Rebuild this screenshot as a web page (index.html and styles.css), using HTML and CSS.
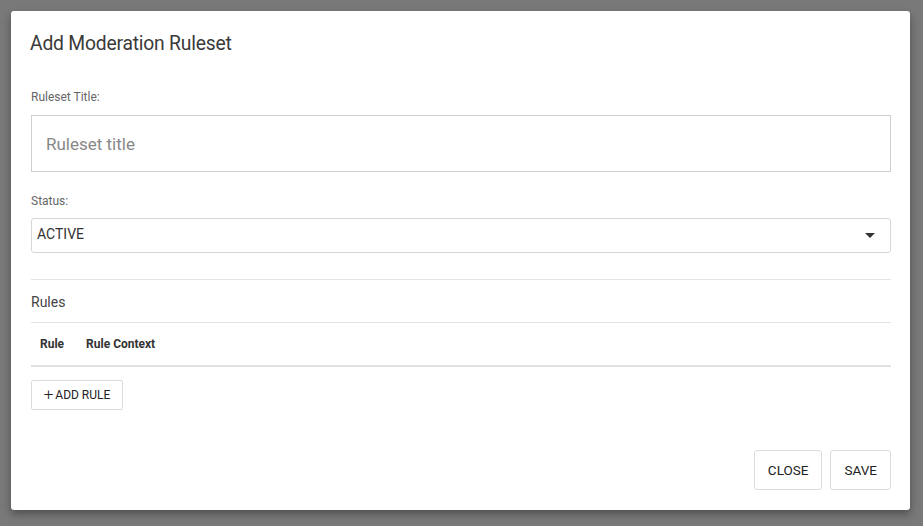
FILE: index.html
```html
<!DOCTYPE html>
<html>
<head>
<meta charset="utf-8">
<link rel="stylesheet" href="styles.css">
</head>
<body>
<div class="modal">
  <h2 class="title">Add Moderation Ruleset</h2>
  <div class="field">
    <label class="label">Ruleset Title:</label>
    <input class="text-input" type="text" placeholder="Ruleset title">
  </div>
  <div class="field field-status">
    <label class="label">Status:</label>
    <div class="select">
      <span class="select-value">ACTIVE</span>
      <svg class="caret" width="10" height="5" viewBox="0 0 10 5"><path d="M0 0 L10 0 L5 5 Z" fill="#333"/></svg>
    </div>
  </div>
  <div class="rules">
    <div class="rules-title">Rules</div>
    <div class="table-head">
      <span class="th th-rule">Rule</span>
      <span class="th">Rule Context</span>
    </div>
    <button class="btn btn-add"><span class="plus">+</span>ADD RULE</button>
  </div>
  <div class="footer">
    <button class="btn btn-footer">CLOSE</button>
    <button class="btn btn-footer">SAVE</button>
  </div>
</div>
</body>
</html>
```
FILE: styles.css
```css
html, body {
  margin: 0;
  padding: 0;
  background: #797979;
  height: 100%;
}
body {
  padding: 11px;
  box-sizing: border-box;
  font-family: Roboto, "Liberation Sans", sans-serif;
  color: #333;
}
.modal {
  width: 899px;
  height: 499px;
  box-sizing: border-box;
  background: #fff;
  border-radius: 3px;
  box-shadow: 0 4px 8px rgba(0,0,0,0.35);
  padding: 0 19px 0 20px;
  display: flex;
  flex-direction: column;
}
.title {
  margin: 20px 0 0 -1px;
  font-size: 19.3px;
  line-height: 26px;
  font-weight: 400;
  color: #3a3a3a;
  letter-spacing: -0.2px;
}
.field {
  display: flex;
  flex-direction: column;
}
.label {
  font-size: 12px;
  color: #666;
  line-height: 14px;
  margin-top: 33px;
  margin-bottom: 11px;
}
.field-status .label {
  margin-top: 22px;
  margin-bottom: 10px;
}
.text-input {
  height: 57px;
  box-sizing: border-box;
  border: 1px solid #cfcfd2;
  border-radius: 0;
  padding: 0 14px;
  font-family: inherit;
  font-size: 17px;
  outline: none;
  margin: 0;
}
.text-input::placeholder {
  color: #888;
}
.select {
  height: 35px;
  box-sizing: border-box;
  border: 1px solid #d4d6dc;
  border-radius: 3px;
  display: flex;
  align-items: center;
  justify-content: space-between;
  padding: 0 15px 0 5px;
  font-size: 14px;
  color: #333;
}
.select-value {
  margin-top: -3px;
}
.rules {
  margin-top: 26px;
  border-top: 1px solid #e3e4e8;
}
.rules-title {
  font-size: 14px;
  line-height: 20px;
  padding: 12px 0 10px;
  color: #444;
  border-bottom: 1px solid #e3e4e8;
}
.table-head {
  height: 44px;
  box-sizing: border-box;
  border-bottom: 2px solid #dfe0e4;
  display: flex;
  align-items: center;
  padding-left: 9px;
  gap: 22px;
}
.th {
  font-size: 12px;
  font-weight: 700;
  color: #333;
}
.btn {
  font-family: inherit;
  background: #fff;
  border: 1px solid #dcdcdc;
  border-radius: 2px;
  color: #222;
  cursor: pointer;
  padding: 0;
}
.btn-add {
  margin-top: 13px;
  height: 30px;
  width: 92px;
  font-size: 12px;
  display: flex;
  align-items: center;
  justify-content: center;
  gap: 2px;
}
.plus {
  font-size: 17px;
  font-weight: 300;
  line-height: 1;
  margin-top: -2px;
}
.footer {
  margin-top: auto;
  margin-bottom: 20px;
  display: flex;
  justify-content: flex-end;
  gap: 8px;
}
.btn-footer {
  height: 40px;
  font-size: 13.5px;
  padding: 0 13px;
  border-radius: 3px;
}
```
